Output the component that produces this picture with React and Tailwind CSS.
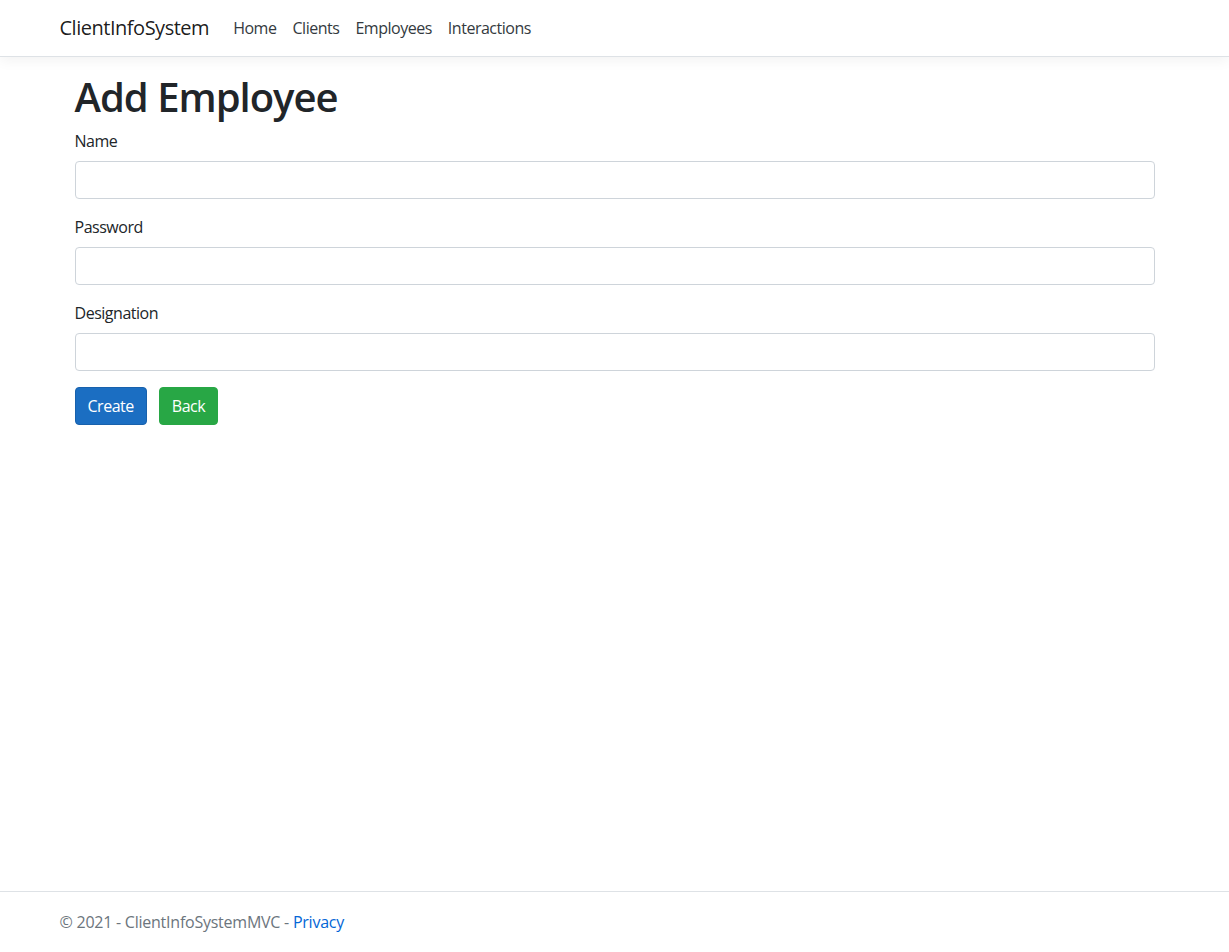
export default function App() {
  return (
    <div className="min-h-screen flex flex-col bg-white text-[#212529] text-[16px] leading-[1.5] tracking-[-0.03em] font-['Open_Sans',sans-serif]">
      <header>
        <nav className="bg-white border-b border-[#dee2e6] shadow-[0_4px_12px_rgba(0,0,0,0.05)] h-[57px] mb-4">
          <div className="max-w-[1140px] mx-auto px-[15px] h-full flex items-center">
            <a className="text-[20px] leading-[30px] text-black/90 mr-4 py-[5px]" href="#">ClientInfoSystem</a>
            <ul className="flex">
              {["Home", "Clients", "Employees", "Interactions"].map((l) => (
                <li key={l}>
                  <a className="block px-2 py-2 text-[#343a40]" href="#">{l}</a>
                </li>
              ))}
            </ul>
          </div>
        </nav>
      </header>
      <div className="max-w-[1140px] w-full mx-auto px-[15px] flex-1">
        <main className="pb-4 px-[15px]">
          <h1 className="text-[40px] leading-[1.2] font-semibold tracking-[-0.025em] mb-2">Add Employee</h1>
          <form>
            {["Name", "Password", "Designation"].map((f) => (
              <div key={f} className="mb-4">
                <label className="block mb-2">{f}</label>
                <input
                  type={f === "Password" ? "password" : "text"}
                  className="block w-full h-[38px] px-3 py-1.5 border border-[#ced4da] rounded-[4px] bg-white outline-none"
                />
              </div>
            ))}
            <div className="flex">
              <button type="button" className="h-[38px] px-3 border border-[#1861ac] bg-[#1b6ec2] text-white rounded-[4px]">Create</button>
              <a href="#" className="h-[38px] ml-[12px] px-3 flex items-center border border-[#28a745] bg-[#28a745] text-white rounded-[4px]">Back</a>
            </div>
          </form>
        </main>
      </div>
      <footer className="border-t border-[#dee2e6] h-[61px] text-[#6c757d] tracking-[-0.015em]">
        <div className="max-w-[1140px] mx-auto px-[15px] leading-[60px]">
          © 2021 - ClientInfoSystemMVC - <a href="#" className="text-[#0366d6]">Privacy</a>
        </div>
      </footer>
    </div>
  );
}
